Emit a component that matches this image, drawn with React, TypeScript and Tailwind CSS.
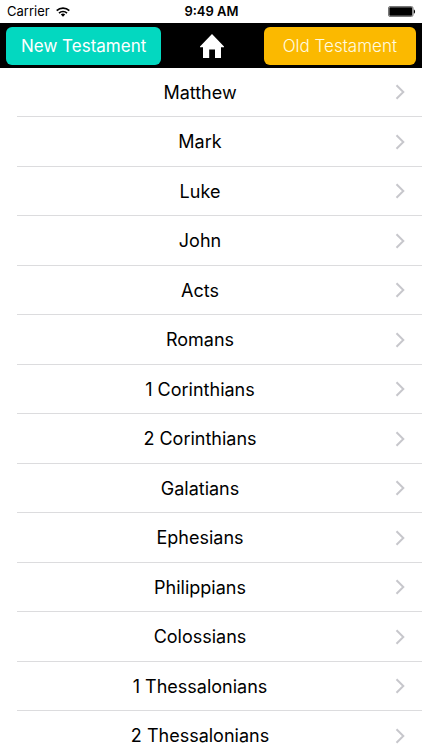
import React, { useState } from 'react';

type Testament = 'new' | 'old';

const BOOKS: Record<Testament, string[]> = {
  new: [
    'Matthew',
    'Mark',
    'Luke',
    'John',
    'Acts',
    'Romans',
    '1 Corinthians',
    '2 Corinthians',
    'Galatians',
    'Ephesians',
    'Philippians',
    'Colossians',
    '1 Thessalonians',
    '2 Thessalonians',
  ],
  old: ['Genesis', 'Exodus', 'Leviticus', 'Numbers', 'Deuteronomy', 'Joshua', 'Judges', 'Ruth'],
};

const WifiIcon: React.FC = () => (
  <svg className="h-[10px] w-[14px]" viewBox="0 0 14 10" fill="none" stroke="black" aria-hidden="true">
    <path strokeWidth="1.7" d="M0.7 3.7a9 9 0 0 1 12.6 0" />
    <path strokeWidth="1.6" d="M3 6.1a5.7 5.7 0 0 1 8 0" />
    <path fill="black" stroke="none" d="M7 9.8 4.8 7.6a3.1 3.1 0 0 1 4.4 0z" />
  </svg>
);

const BatteryIcon: React.FC = () => (
  <svg className="h-[11px] w-[28px]" viewBox="0 0 28 11" aria-hidden="true">
    <rect x="0.5" y="0.5" width="24.5" height="10" rx="1.5" fill="white" stroke="#777" />
    <rect x="1.3" y="1.3" width="22.9" height="8.4" rx="0.8" fill="black" />
    <path d="M25.8 3.4c1.7.4 1.7 3.8 0 4.2z" fill="black" />
  </svg>
);

const HomeIcon: React.FC = () => (
  <svg className="h-[24px] w-[24px]" viewBox="0 0 24 24" fill="white" aria-hidden="true">
    <path d="M12 0 24 12.4v.8h-3V24h-6v-8.500H9.200V24H3V13.200H0v-.8z" />
  </svg>
);

const ChevronIcon: React.FC = () => (
  <svg className="h-[16px] w-[10px]" viewBox="0 0 10 16" fill="none" stroke="#c7c7cc" strokeWidth="2" aria-hidden="true">
    <path d="M1.500 1.300 8.300 8l-6.800 6.700" />
  </svg>
);

const StatusBar: React.FC = () => (
  <div className="grid h-[23px] shrink-0 grid-cols-3 items-center pr-[6px] pl-[7px] text-[13px] leading-none">
    <div className="flex items-center gap-[6px]">
      <span>Carrier</span>
      <WifiIcon />
    </div>
    <span className="text-center font-semibold">9:49 AM</span>
    <div className="flex justify-end">
      <BatteryIcon />
    </div>
  </div>
);

const App: React.FC = () => {
  const [testament, setTestament] = useState<Testament>('new');

  return (
    <div className="flex h-screen flex-col bg-white font-['Inter','Liberation_Sans',sans-serif] text-black">
      <StatusBar />
      <header className="flex h-[45px] shrink-0 items-center justify-between bg-black px-[6px]">
        <button
          type="button"
          onClick={() => setTestament('new')}
          className="h-[38px] rounded-md bg-[#03d8c0] px-[15px] pt-[3px] text-[17px] text-white"
        >
          New Testament
        </button>
        <button type="button" aria-label="Home">
          <HomeIcon />
        </button>
        <button
          type="button"
          onClick={() => setTestament('old')}
          className="h-[38px] rounded-md bg-[#fbb900] px-[19px] pt-[3px] text-[17px] font-light text-[#fffbe0]"
        >
          Old Testament
        </button>
      </header>
      <main className="flex-1 overflow-y-auto [scrollbar-width:none]">
        <ul className="pl-[17px]">
          {BOOKS[testament].map((book) => (
            <li key={book} className="border-b border-[#dcdcde] odd:h-[49px] even:h-[50px]">
              <a href="#" className="flex h-full items-center gap-3 pr-[17px] text-[18px]">
                <span className="flex-1 text-center">{book}</span>
                <ChevronIcon />
              </a>
            </li>
          ))}
        </ul>
      </main>
    </div>
  );
};

export default App;
